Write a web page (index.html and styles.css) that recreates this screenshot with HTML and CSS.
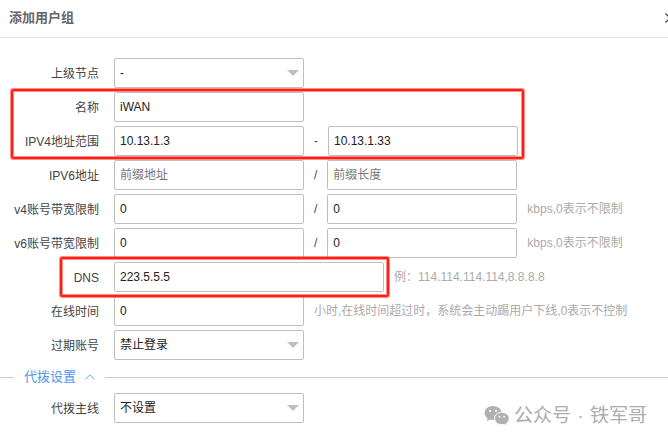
FILE: index.html
```
<!DOCTYPE html>
<html lang="zh-CN">
<head>
    <meta charset="UTF-8">
    <title>添加用户组</title>
    <link rel="stylesheet" href="styles.css">
</head>
<body>

<div class="dialog">
    <div class="header">
        <span class="title">添加用户组</span>
        <svg class="close" width="10" height="10" viewBox="0 0 10 10"><path d="M0.5 0.5 L9.5 9.5 M9.5 0.5 L0.5 9.5"/></svg>
    </div>

    <div class="form">
        <div class="row">
            <label class="label">上级节点</label>
            <div class="field select">-</div>
        </div>
        <div class="row">
            <label class="label">名称</label>
            <div class="field">iWAN</div>
        </div>
        <div class="row">
            <label class="label">IPV4地址范围</label>
            <div class="field">10.13.1.3</div>
            <span class="sep">-</span>
            <div class="field">10.13.1.33</div>
        </div>
        <div class="row">
            <label class="label">IPV6地址</label>
            <div class="field empty">前缀地址</div>
            <span class="sep">/</span>
            <div class="field empty">前缀长度</div>
        </div>
        <div class="row">
            <label class="label">v4账号带宽限制</label>
            <div class="field">0</div>
            <span class="sep">/</span>
            <div class="field">0</div>
            <span class="hint">kbps,0表示不限制</span>
        </div>
        <div class="row">
            <label class="label">v6账号带宽限制</label>
            <div class="field">0</div>
            <span class="sep">/</span>
            <div class="field">0</div>
            <span class="hint">kbps,0表示不限制</span>
        </div>
        <div class="row">
            <label class="label">DNS</label>
            <div class="field wide">223.5.5.5</div>
            <span class="hint">例：114.114.114.114,8.8.8.8</span>
        </div>
        <div class="row">
            <label class="label">在线时间</label>
            <div class="field">0</div>
            <span class="hint">小时,在线时间超过时，系统会主动踢用户下线,0表示不控制</span>
        </div>
        <div class="row">
            <label class="label">过期账号</label>
            <div class="field select">禁止登录</div>
        </div>
    </div>

    <div class="section">
        <span class="section-name">代拨设置</span>
        <svg class="arrow" width="10" height="6" viewBox="0 0 10 6"><path d="M0.5 5.3 L5 0.8 L9.5 5.3"/></svg>
    </div>

    <div class="row">
        <label class="label">代拨主线</label>
        <div class="field select">不设置</div>
    </div>

    <div class="mark mark-ip"></div>
    <div class="mark mark-dns"></div>

    <div class="watermark">
        <svg width="26" height="22" viewBox="0 0 26 22">
            <path class="bubble" d="M9 1 C4.2 1 0.6 4.1 0.6 8 C0.6 10.2 1.7 12.1 3.6 13.4 L2.8 16.2 L6 14.5 C7 14.8 8 15 9 15 C13.8 15 17.6 11.9 17.6 8 C17.6 4.1 13.8 1 9 1 Z"/>
            <path class="bubble front" d="M17.8 7.3 C13.7 7.3 10.6 10 10.6 13.5 C10.6 17 13.7 19.7 17.8 19.7 C18.7 19.7 19.6 19.5 20.4 19.3 L23 20.9 L22.3 18.4 C24.1 17.3 25.2 15.5 25.2 13.5 C25.2 10 21.9 7.3 17.8 7.3 Z"/>
            <g class="eyes">
                <circle cx="6.1" cy="5.9" r="1.1"/>
                <circle cx="12" cy="5.9" r="1.1"/>
                <circle cx="15.5" cy="11.7" r="0.95"/>
                <circle cx="20.2" cy="11.7" r="0.95"/>
            </g>
        </svg>
        <span class="account">公众号 · 铁军哥</span>
    </div>
</div>

</body>
</html>
```
FILE: styles.css
```
body{
    margin: 0;
    background-color: #fff;
    font-family: "Liberation Sans", Arial, "Noto Sans CJK SC", sans-serif;
    font-size: 12px;
    color: #444;
}
.dialog{
    position: relative;
    height: 442px;
    overflow: hidden;
}

.header{
    display: flex;
    box-sizing: border-box;
    width: 675px;
    height: 38px;
    padding: 0 0 5px 9px;
    align-items: center;
    justify-content: space-between;
    border-bottom: 1px solid #ebebeb;
}
.title{
    font-size: 13px;
    font-weight: bold;
    color: #666;
}
.close{
    margin-top: 4px;
    fill: none;
    stroke: #333;
    stroke-width: 1.2;
}

.form{
    padding-top: 20px;
}
.row{
    display: flex;
    height: 30px;
    margin-bottom: 4px;
    line-height: 30px;
    white-space: nowrap;
}
.label{
    width: 99px;
    margin-right: 15px;
    padding-top: 1px;
    text-align: right;
}
.field{
    position: relative;
    box-sizing: border-box;
    width: 190px;
    height: 30px;
    padding-left: 5px;
    line-height: 29px;
    border: 1px solid #bfbfbf;
    border-radius: 2px;
    color: #222;
}
.wide{
    width: 270px;
}
.empty{
    color: #777;
}
.select::after{
    content: "";
    position: absolute;
    top: 11px;
    right: 4px;
    border: 6px solid transparent;
    border-top-color: #bfbfbf;
    border-bottom: 0;
}
.sep{
    margin: 0 10px;
}
.hint{
    margin-left: 10px;
    color: #aaa;
}

/* 分组标题 */
.section{
    display: flex;
    height: 26px;
    margin-bottom: 3px;
    align-items: center;
    color: #4c96f0;
}
.section::before,
.section::after{
    content: "";
    height: 1px;
    background-color: #c3cedd;
}
.section::before{
    width: 14px;
    margin-right: 10px;
}
.section::after{
    flex: 1;
    margin-left: 10px;
}
.section-name{
    padding-bottom: 3px;
    font-size: 13px;
}
.arrow{
    margin: 0 0 1px 9px;
    fill: none;
    stroke: #4c96f0;
    stroke-width: 0.9;
}

/* 红框 */
.mark{
    position: absolute;
    box-sizing: border-box;
    border: 2px solid #ff2015;
    border-radius: 2px;
    box-shadow: 0 0 0 1px rgba(255,32,21,0.5), inset 0 0 0 1px rgba(255,32,21,0.5);
}
.mark-ip{
    left: 11px;
    top: 89px;
    width: 513px;
    height: 70px;
}
.mark-dns{
    left: 60px;
    top: 257px;
    width: 329px;
    height: 40px;
}

.watermark{
    position: absolute;
    left: 484px;
    top: 402px;
    display: flex;
    align-items: center;
    height: 28px;
}
.watermark svg{
    margin-bottom: 1px;
}
.bubble{
    fill: #b0b0b0;
}
.front{
    stroke: #fff;
    stroke-width: 1;
}
.eyes{
    fill: #fff;
}
.account{
    margin-left: 4px;
    font-size: 19px;
    line-height: 28px;
    word-spacing: 1px;
    color: #adadad;
    white-space: nowrap;
}
```
